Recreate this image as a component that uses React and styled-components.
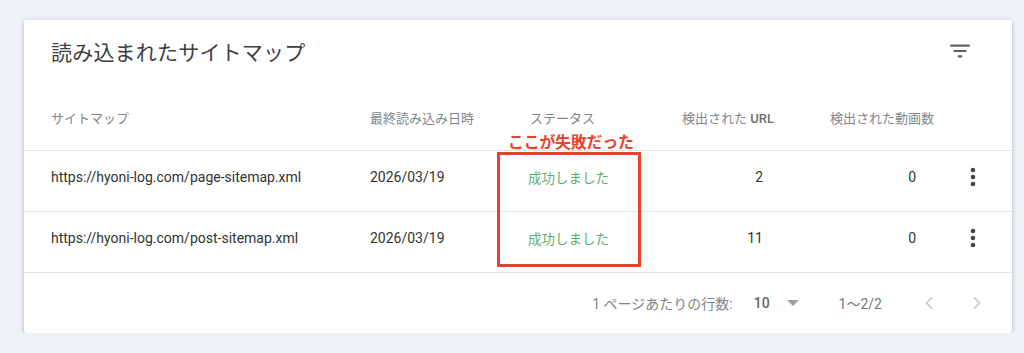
import styled, { createGlobalStyle } from "styled-components"

const GlobalStyle = createGlobalStyle`
    * {
        box-sizing: border-box;
    }
    html, body {
        margin: 0;
        padding: 0;
        background-color: #eef1f6;
    }
    body {
        font-family: Roboto, "Noto Sans CJK JP", sans-serif;
    }
`

const rows = [
    { url: "https://hyoni-log.com/page-sitemap.xml", date: "2026/03/19", status: "成功しました", urls: 2, videos: 0 },
    { url: "https://hyoni-log.com/post-sitemap.xml", date: "2026/03/19", status: "成功しました", urls: 11, videos: 0 },
]

function FilterIcon() {
    return (
        <svg width="26" height="26" viewBox="0 0 24 24" fill="#5f6368">
            <path d="M10 18h4v-2h-4v2zM3 6v2h18V6H3zm3 7h12v-2H6v2z" />
        </svg>
    )
}

function MoreIcon() {
    return (
        <svg width="8" height="22" viewBox="0 0 8 22" fill="#444">
            <circle cx="4" cy="4" r="2.3" />
            <circle cx="4" cy="11" r="2.3" />
            <circle cx="4" cy="18" r="2.3" />
        </svg>
    )
}

function DropIcon() {
    return (
        <svg width="12" height="6" viewBox="0 0 12 6" fill="#9e9e9e">
            <path d="M0 0l6 6 6-6z" />
        </svg>
    )
}

function Chevron({ dir }) {
    return (
        <svg width="24" height="24" viewBox="0 0 24 24" fill="none" stroke="#c4c4c4" strokeWidth="1.6">
            {dir === "left"
                ? <path d="M15 6.5l-5.5 5.5 5.5 5.5" />
                : <path d="M9 6.5l5.5 5.5-5.5 5.5" />}
        </svg>
    )
}

export default function App() {
    return (
        <>
            <GlobalStyle />
            <Card>
                <TitleBar>
                    <h1>読み込まれたサイトマップ</h1>
                    <IconButton><FilterIcon /></IconButton>
                </TitleBar>

                <HeaderRow>
                    <HeadCell>サイトマップ</HeadCell>
                    <HeadCell>最終読み込み日時</HeadCell>
                    <HeadCell>ステータス</HeadCell>
                    <HeadCell right>検出された <b>URL</b></HeadCell>
                    <HeadCell right>検出された動画数</HeadCell>
                    <HeadCell />
                </HeaderRow>

                {rows.map((row, index) => (
                    <Row key={index}>
                        <Cell>{row.url}</Cell>
                        <Cell>{row.date}</Cell>
                        <Status>{row.status}</Status>
                        <Cell right pad={11}>{row.urls}</Cell>
                        <Cell right pad={18}>{row.videos}</Cell>
                        <Cell center><MoreIcon /></Cell>
                    </Row>
                ))}

                <Footer>
                    <span>1 ページあたりの行数:</span>
                    <PageSize>10</PageSize>
                    <DropWrap><DropIcon /></DropWrap>
                    <Range>1〜2/2</Range>
                    <Pager>
                        <Chevron dir="left" />
                        <Chevron dir="right" />
                    </Pager>
                </Footer>

                <Annotation>
                    <span>ここが失敗だった</span>
                    <RedBox />
                </Annotation>
            </Card>
        </>
    )
}

const Card = styled.div`
    position: relative;
    margin: 20px 0 0 24px;
    width: 988px;
    height: 313px;
    background-color: #fff;
    border-radius: 2px;
    box-shadow: 0 2px 2px 0 rgba(0, 0, 0, 0.14), 0 3px 1px -2px rgba(0, 0, 0, 0.12), 0 1px 5px 0 rgba(0, 0, 0, 0.2);
    display: flex;
    flex-direction: column;
`
const TitleBar = styled.div`
    display: flex;
    align-items: center;
    justify-content: space-between;
    height: 66px;
    padding: 0 39px 4px 27px;
    h1 {
        margin: 0;
        font-size: 21px;
        font-weight: 400;
        color: #3c4043;
        letter-spacing: 0.2px;
    }
`
const IconButton = styled.div`
    display: flex;
    align-items: center;
    justify-content: center;
    width: 26px;
    height: 26px;
`
const grid = `
    display: grid;
    grid-template-columns: 319px 160px 150px 94px 160px 1fr;
    padding-left: 27px;
    align-items: center;
    border-bottom: 1px solid #e3e3e3;
`
const HeaderRow = styled.div`
    ${grid}
    height: 65px;
    padding-bottom: 2px;
`
const HeadCell = styled.div`
    font-size: 13px;
    color: #80868b;
    text-align: ${(p) => (p.right ? "right" : "left")};
    white-space: nowrap;
    b {
        font-weight: 500;
        color: #6b6f73;
    }
`
const Row = styled.div`
    ${grid}
    height: 61px;
    padding-bottom: 9px;
`
const Cell = styled.div`
    font-size: 14px;
    color: #333;
    white-space: nowrap;
    text-align: ${(p) => (p.right ? "right" : "left")};
    padding-right: ${(p) => (p.pad ? p.pad + "px" : "0")};
    display: ${(p) => (p.center ? "flex" : "block")};
    justify-content: center;
`
const Status = styled.div`
    margin-left: -2px;
    font-size: 13.5px;
    color: #5fae6e;
`
const Footer = styled.div`
    display: flex;
    align-items: center;
    justify-content: flex-end;
    flex: 1;
    padding-right: 23px;
    font-size: 14px;
    color: #80868b;
`
const PageSize = styled.span`
    margin-left: 21px;
    font-size: 14px;
    font-weight: 500;
    color: #666;
`
const DropWrap = styled.span`
    display: flex;
    margin-left: 17px;
`
const Range = styled.span`
    margin-left: 40px;
    font-size: 14px;
    color: #777;
`
const Pager = styled.div`
    display: flex;
    gap: 24px;
    margin-left: 35px;
`
const Annotation = styled.div`
    position: absolute;
    left: 473px;
    top: 113px;
    display: flex;
    flex-direction: column;
    span {
        margin-left: 11px;
        font-size: 16px;
        font-weight: 700;
        color: #e8432d;
        line-height: 20px;
        letter-spacing: -0.3px;
    }
`
const RedBox = styled.div`
    margin-top: -1px;
    width: 144px;
    height: 115px;
    border: 3px solid #e8432d;
`
